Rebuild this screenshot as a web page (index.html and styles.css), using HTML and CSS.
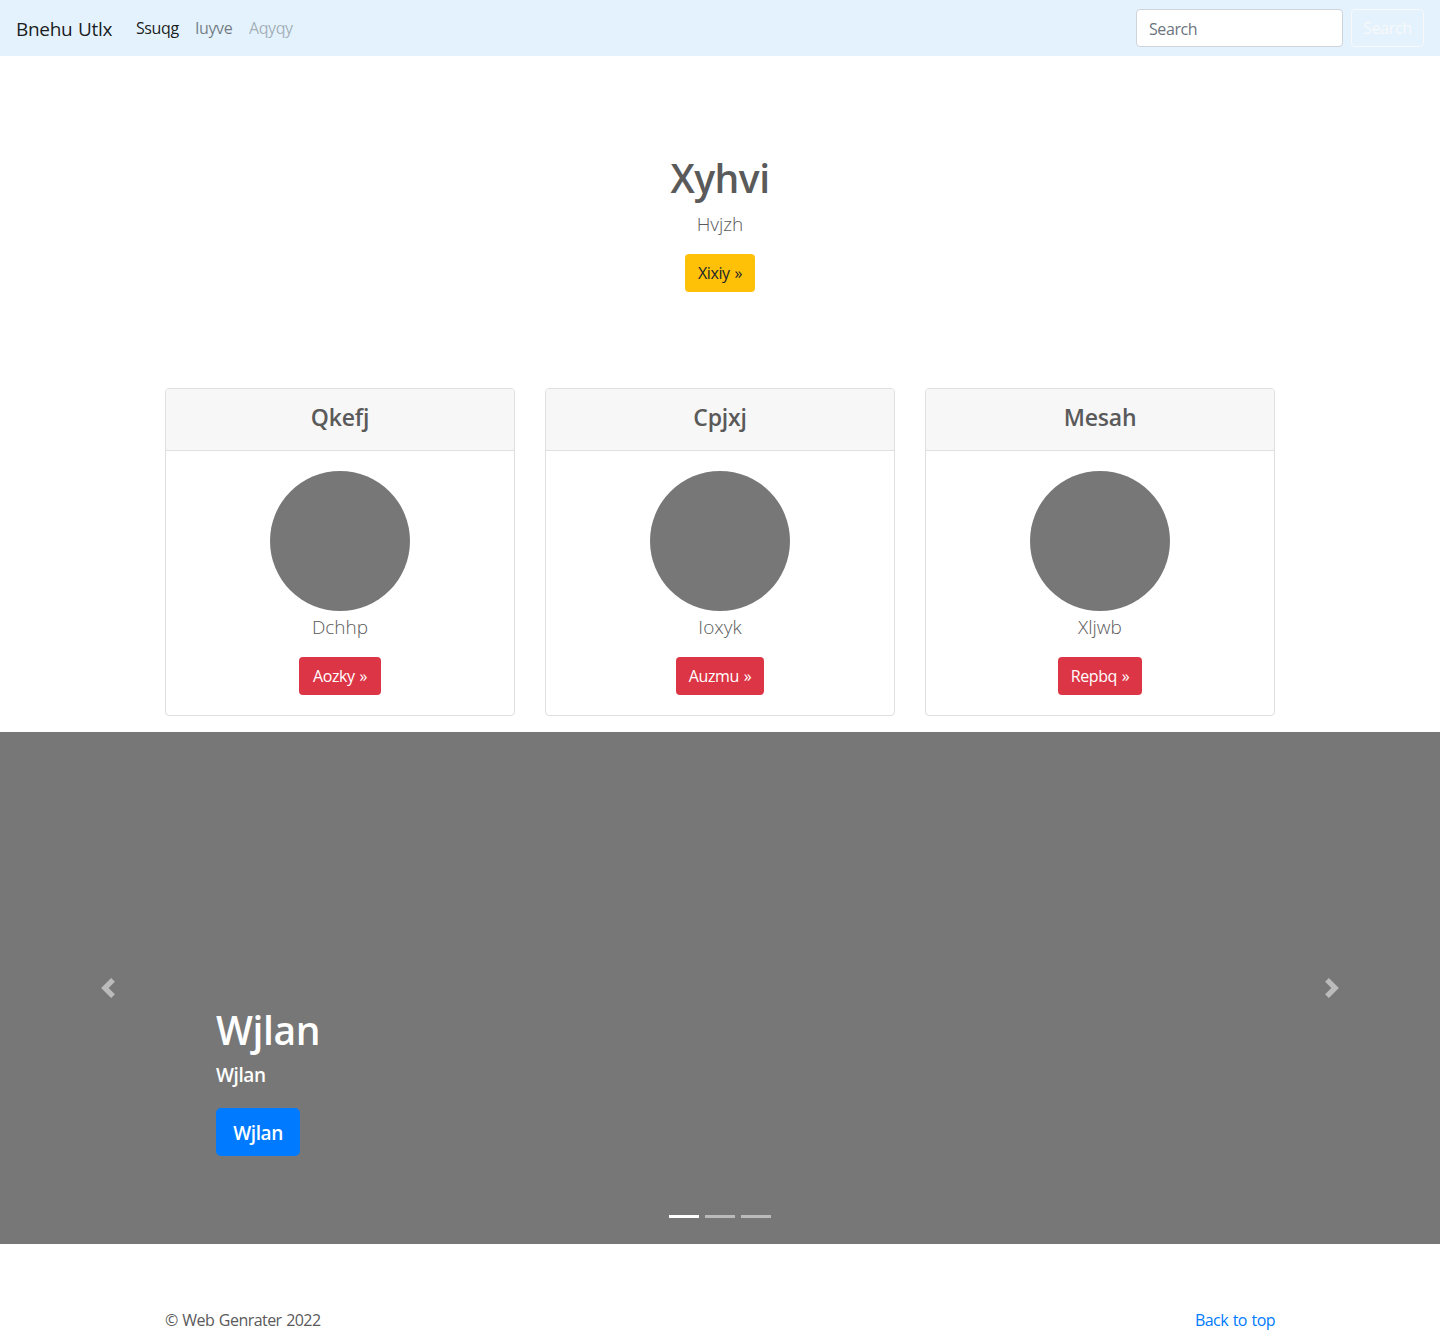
FILE: index.html
```
<!DOCTYPE html>
<html lang="en">
<head>
<meta charset="utf-8">
<title>Bnehu Utlx</title>
<link rel="stylesheet" href="styles.css">
</head>
<body>
<nav class="navbar">
  <a class="brand">Bnehu Utlx</a>
  <div class="nav-links">
    <a class="active">Ssuqg</a><a class="second">Iuyve</a><a class="disabled">Aqyqy</a>
  </div>
  <form class="search">
    <input type="text" placeholder="Search">
    <button type="button" class="btn btn-outline">Search</button>
  </form>
</nav>
<section class="hero">
  <h1>Xyhvi</h1>
  <p class="lead">Hvjzh</p>
  <a class="btn btn-warning hero-btn">Xixiy »</a>
</section>
<main class="cards">
  <article class="card">
    <header><h4>Qkefj</h4></header>
    <div class="card-body"><div class="avatar"></div><p class="lead">Dchhp</p><a class="btn btn-danger b1">Aozky »</a></div>
  </article>
  <article class="card">
    <header><h4>Cpjxj</h4></header>
    <div class="card-body"><div class="avatar"></div><p class="lead">Ioxyk</p><a class="btn btn-danger b2">Auzmu »</a></div>
  </article>
  <article class="card">
    <header><h4>Mesah</h4></header>
    <div class="card-body"><div class="avatar"></div><p class="lead">Xljwb</p><a class="btn btn-danger b3">Repbq »</a></div>
  </article>
</main>
<section class="carousel">
  <a class="control"><svg width="20" height="20" viewBox="0 0 8 8" fill="#fff"><path d="M5.25 0l-4 4 4 4 1.5-1.5L4.25 4l2.5-2.5L5.25 0z"/></svg></a>
  <div class="slide">
    <div class="caption">
      <h1>Wjlan</h1>
      <p>Wjlan</p>
      <a class="btn btn-primary">Wjlan</a>
    </div>
    <div class="indicators"><span class="on"></span><span></span><span></span></div>
  </div>
  <a class="control"><svg width="20" height="20" viewBox="0 0 8 8" fill="#fff"><path d="M2.75 0l-1.5 1.5L3.75 4l-2.5 2.5L2.75 8l4-4-4-4z"/></svg></a>
</section>
<footer class="footer"><p>© Web Genrater 2022</p><a>Back to top</a></footer>
</body>
</html>
```
FILE: styles.css
```
* { box-sizing: border-box; }
body {
  margin: 0;
  font: 400 16px/24px "Segoe UI", "Open Sans", "Noto Sans", sans-serif;
  letter-spacing: -.4px;
  word-spacing: 1px;
  color: #5a5a5a;
  background: #fff;
}
h1, h4, p { margin: 0; }
.navbar {
  display: flex;
  align-items: center;
  height: 56px;
  padding: 0 16px;
  background: #e3f2fd;
}
.brand {
  width: 96px;
  margin-right: 16px;
  padding-top: 2px;
  font-size: 19px;
  letter-spacing: -.3px;
  line-height: 30px;
  color: rgba(0, 0, 0, .9);
  white-space: nowrap;
}
.nav-links { display: flex; flex: 1; }
.nav-links a { width: 61px; padding: 8px 0 8px 8px; color: rgba(0, 0, 0, .5); }
.nav-links a:first-child { width: 59px; }
.nav-links a.second { width: 54px; }
.nav-links .active { color: rgba(0, 0, 0, .9); }
.nav-links .disabled { color: rgba(0, 0, 0, .3); }
.search { display: flex; gap: 8px; }
.search input {
  width: 207px;
  height: 38px;
  padding: 8px 12px 6px;
  font: inherit;
  letter-spacing: inherit;
  background: #fff;
  border: 1px solid #ced4da;
  border-radius: 4px;
}
.search input::placeholder { color: #6c757d; opacity: 1; }
.btn {
  display: flex;
  align-items: center;
  justify-content: center;
  height: 38px;
  font: inherit;
  letter-spacing: inherit;
  border: 1px solid transparent;
  border-radius: 4px;
  white-space: nowrap;
}
.btn-outline { width: 73px; padding: 0; color: #f8f9fa; background: transparent; border-color: #f8f9fa; }
.btn-warning { color: #212529; background: #ffc107; }
.btn-danger { color: #fff; background: #dc3545; }
.hero {
  display: flex;
  flex-direction: column;
  align-items: center;
  height: 332px;
  padding-top: 98px;
}
.hero h1 { margin-bottom: 7px; font-size: 39px; letter-spacing: -.5px; line-height: 48px; font-weight: 600; }
.lead { font-size: 19px; letter-spacing: 0; line-height: 30px; font-weight: 300; }
.hero .lead { margin-bottom: 15px; }
.card .lead { padding-top: 1px; margin-bottom: 15px; }
.hero-btn { width: 70px; }
.cards {
  display: grid;
  grid-template-columns: repeat(3, 1fr);
  gap: 30px;
  width: 1110px;
  margin: 0 auto 16px;
}
.card { height: 328px; border: 1px solid #dfdfdf; border-radius: 4px; text-align: center; overflow: hidden; }
.card header { height: 62px; padding-top: 12px; background: #f7f7f7; border-bottom: 1px solid #dfdfdf; }
.card h4 { font-size: 23px; line-height: 32px; font-weight: 600; letter-spacing: -.2px; }
.card-body { display: flex; flex-direction: column; align-items: center; padding-top: 20px; }
.avatar { width: 140px; height: 140px; border-radius: 50%; background: #777; }
.b1 { width: 82px; }
.b2 { width: 88px; }
.b3 { width: 84px; }
.carousel { display: flex; height: 512px; background: #777; color: #fff; }
.control { display: flex; width: 216px; align-items: center; justify-content: center; opacity: .5; }
.slide { display: flex; flex: 1; flex-direction: column; justify-content: space-between; padding: 274px 0 16px; }
.caption h1 { margin-bottom: 6px; font-size: 39px; letter-spacing: -.4px; line-height: 48px; font-weight: 600; }
.caption p { margin-bottom: 18px; font-size: 19px; letter-spacing: -.4px; line-height: 30px; font-weight: 600; }
.btn-primary { width: 84px; height: 48px; padding-top: 2px; background: #007bff; border-radius: 5px; font-size: 19px; font-weight: 600; }
.indicators { display: flex; justify-content: center; gap: 6px; padding: 10px 0; }
.indicators span { width: 30px; height: 3px; background: #fff; opacity: .5; }
.indicators .on { opacity: 1; }
.footer { display: flex; justify-content: space-between; width: 1110px; height: 88px; margin: 0 auto; padding-top: 64px; letter-spacing: -.55px; }
.footer a { color: #007bff; }
```
